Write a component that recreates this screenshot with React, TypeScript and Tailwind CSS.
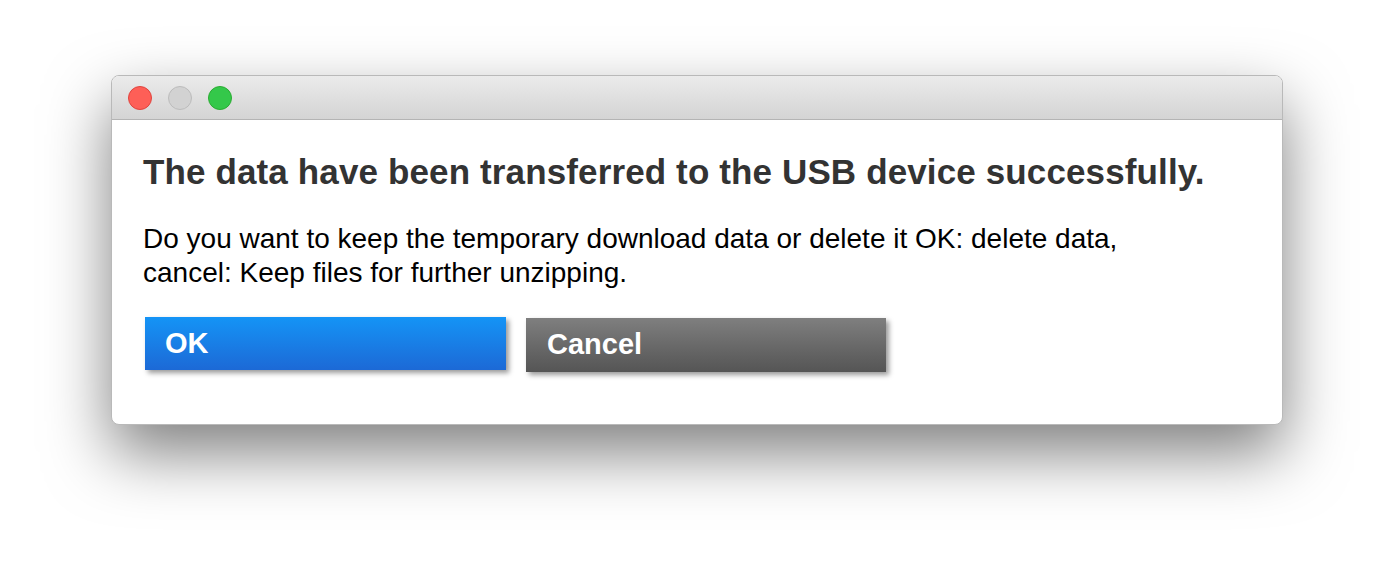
export default function App() {
  return (
    <div className="h-[572px] w-[1394px] bg-white pl-[111px] pt-[75px] font-['Liberation_Sans',Arial,sans-serif]">
      <div className="flex h-[350px] w-[1172px] flex-col overflow-hidden rounded-[8px] border border-[#b9b9b9] bg-white shadow-[0_28px_64px_rgba(0,0,0,0.5)]">
        <div className="flex h-[44px] items-center gap-[16px] border-b border-[#b4b4b4] bg-gradient-to-b from-[#ebebeb] to-[#d4d4d4] pl-[16px]">
          <span className="h-[24px] w-[24px] rounded-full border border-[#e0443e] bg-[#fe5f57]" />
          <span className="h-[24px] w-[24px] rounded-full border border-[#bcbcbc] bg-[#d2d2d2]" />
          <span className="h-[24px] w-[24px] rounded-full border border-[#2aac32] bg-[#34c84a]" />
        </div>
        <div className="flex flex-col px-[31px] pt-[32px]">
          <h1 className="text-[35px] font-bold leading-[40px] tracking-[0.13px] text-[#333]">
            The data have been transferred to the USB device successfully.
          </h1>
          <p className="mt-[30px] w-[1000px] text-[28px] leading-[34px] text-black">
            Do you want to keep the temporary download data or delete it OK: delete data, cancel: Keep files for further unzipping.
          </p>
          <div className="mt-[27px] flex items-start gap-[20px] pl-[2px]">
            <button className="flex h-[53px] w-[361px] items-center bg-gradient-to-b from-[#1494f6] to-[#1c69d6] pl-[20px] text-[29px] font-bold text-white shadow-[3px_3px_5px_rgba(0,0,0,0.4)]">
              OK
            </button>
            <button className="mt-[1px] flex h-[54px] w-[360px] items-center bg-gradient-to-b from-[#7f7f7f] to-[#555555] pl-[21px] text-[29px] font-bold text-white shadow-[3px_3px_5px_rgba(0,0,0,0.4)]">
              Cancel
            </button>
          </div>
        </div>
      </div>
    </div>
  );
}
